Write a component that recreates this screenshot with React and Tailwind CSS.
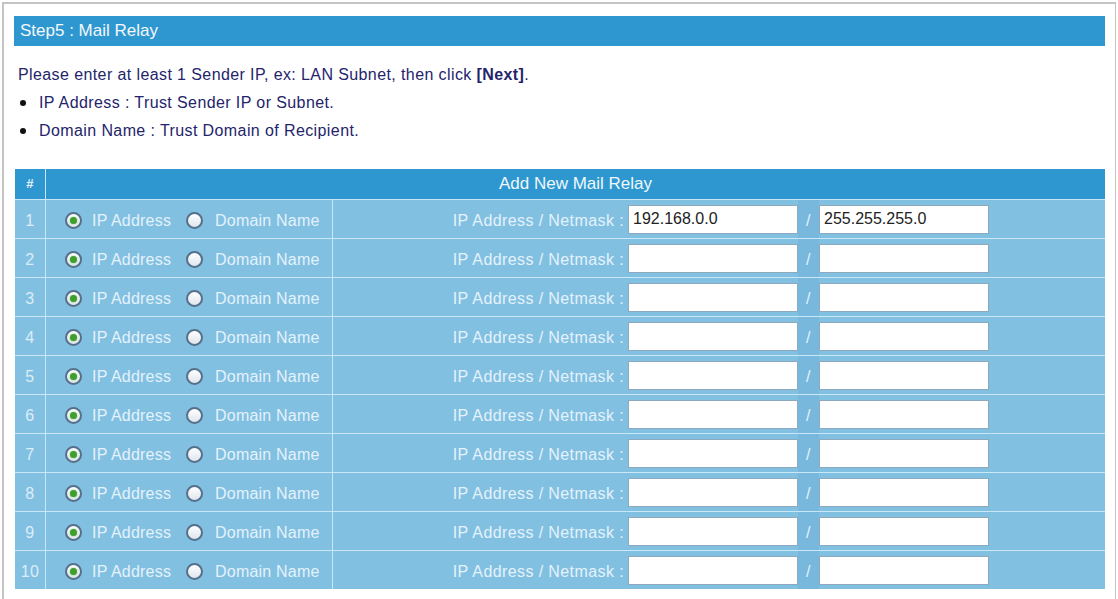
import { useState } from "react";

const ROWS = [
  { ip: "192.168.0.0", mask: "255.255.255.0" },
  { ip: "", mask: "" },
  { ip: "", mask: "" },
  { ip: "", mask: "" },
  { ip: "", mask: "" },
  { ip: "", mask: "" },
  { ip: "", mask: "" },
  { ip: "", mask: "" },
  { ip: "", mask: "" },
  { ip: "", mask: "" },
];

// Old-school radio look: grey ring, pale face, green dot when checked
const Radio = ({ checked, onClick }) => (
  <span
    onClick={onClick}
    className="w-[17px] h-[17px] rounded-full border-2 border-[#56708a] bg-gradient-to-b from-[#ffffff] to-[#dfe6ee] flex items-center justify-center cursor-pointer shrink-0"
  >
    {checked && <span className="w-[7px] h-[7px] rounded-full bg-[#3f9e2e] shadow-[0_0_2px_#7fd46a]" />}
  </span>
);

const RelayRow = ({ idx, row, mode, setMode }) => (
  <div className="grid grid-cols-[30px_286px_1fr] gap-x-px h-[38px] bg-[#c8e7f7]">
    <div className="bg-[#82c0e2] flex items-center justify-center pt-[3px] text-[#dcedf8]">{idx + 1}</div>
    <div className="bg-[#82c0e2] flex items-center pl-[19px] pt-[3px] text-[#e4f2fb] tracking-[0.2px]">
      <Radio checked={mode === "ip"} onClick={() => setMode("ip")} />
      <span className="ml-[10px]">IP Address</span>
      <span className="ml-[15px]">
        <Radio checked={mode === "domain"} onClick={() => setMode("domain")} />
      </span>
      <span className="ml-[12px]">Domain Name</span>
    </div>
    <div className="bg-[#82c0e2] flex items-center text-[#e4f2fb]">
      <span className="w-[295px] text-right pr-[4px] pt-[3px]">IP Address / Netmask :</span>
      <input
        defaultValue={row.ip}
        className="w-[170px] h-[29px] bg-white border border-[#8da9bd] px-[4px] text-[#222] tracking-normal outline-none"
      />
      <span className="w-[21px] h-full flex items-center justify-center pt-[3px] bg-[#78b8dc] text-[#e4f2fb]">/</span>
      <input
        defaultValue={row.mask}
        className="w-[170px] h-[29px] bg-white border border-[#8da9bd] px-[4px] text-[#222] tracking-normal outline-none"
      />
    </div>
  </div>
);

export default function App() {
  const [modes, setModes] = useState(ROWS.map(() => "ip"));

  const setMode = (i, m) => setModes((prev) => prev.map((x, j) => (j === i ? m : x)));

  return (
    <div className="w-[1118px] h-[599px] bg-white overflow-hidden font-['Liberation_Sans',Arial,sans-serif] text-[16px] tracking-[0.4px]">
      <div className="ml-[2px] mt-[2px] w-[1114px] h-[620px] border-l-2 border-t-2 border-r border-[#c4c4c4] pl-[10px] pt-[12px]">
        {/* step title */}
        <div className="w-[1091px] h-[30px] bg-[#2f97cf] text-[#f2f8fc] text-[17px] tracking-normal flex items-center pl-[6px]">
          Step5 : Mail Relay
        </div>

        <p className="mt-[19px] ml-[4px] text-[#24246b] leading-[20px]">
          Please enter at least 1 Sender IP, ex: LAN Subnet, then click <b>[Next]</b>.
        </p>
        <ul className="ml-[4px] mt-[8px] flex flex-col gap-[8px] text-[#24246b] leading-[20px]">
          <li className="flex items-center">
            <span className="w-[6px] h-[6px] rounded-full bg-[#111] ml-[2px] mr-[13px]" />
            IP Address : Trust Sender IP or Subnet.
          </li>
          <li className="flex items-center">
            <span className="w-[6px] h-[6px] rounded-full bg-[#111] ml-[2px] mr-[13px]" />
            Domain Name : Trust Domain of Recipient.
          </li>
        </ul>

        {/* relay table */}
        <div className="mt-[28px] ml-[1px] w-[1090px] flex flex-col gap-y-px bg-[#c8e7f7]">
          <div className="grid grid-cols-[30px_1fr] gap-x-px h-[30px] bg-[#c8e7f7]">
            <div className="bg-[#2f97cf] text-[#e6f3fb] text-[13px] font-bold flex items-center justify-center">#</div>
            <div className="bg-[#2f97cf] text-[#eef7fc] text-[17px] tracking-normal flex items-center justify-center">
              Add New Mail Relay
            </div>
          </div>
          {ROWS.map((row, i) => (
            <RelayRow key={i} idx={i} row={row} mode={modes[i]} setMode={(m) => setMode(i, m)} />
          ))}
        </div>
      </div>
    </div>
  );
}
